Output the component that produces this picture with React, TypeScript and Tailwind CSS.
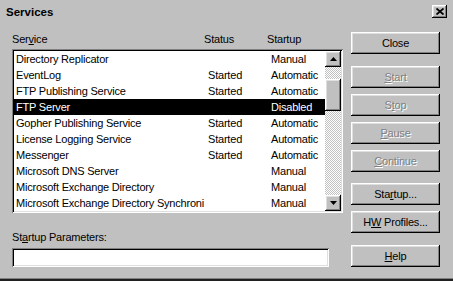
import type { ReactNode } from 'react';

type Row = { name: string; status: string; startup: string; selected?: boolean };

const rows: Row[] = [
  { name: 'Directory Replicator', status: '', startup: 'Manual' },
  { name: 'EventLog', status: 'Started', startup: 'Automatic' },
  { name: 'FTP Publishing Service', status: 'Started', startup: 'Automatic' },
  { name: 'FTP Server', status: '', startup: 'Disabled', selected: true },
  { name: 'Gopher Publishing Service', status: 'Started', startup: 'Automatic' },
  { name: 'License Logging Service', status: 'Started', startup: 'Automatic' },
  { name: 'Messenger', status: 'Started', startup: 'Automatic' },
  { name: 'Microsoft DNS Server', status: '', startup: 'Manual' },
  { name: 'Microsoft Exchange Directory', status: '', startup: 'Manual' },
  { name: 'Microsoft Exchange Directory Synchroni', status: '', startup: 'Manual' },
];

const raised =
  'bg-[#c0c0c0] shadow-[inset_-1px_-1px_#000,inset_1px_1px_#fff,inset_-2px_-2px_#808080,inset_2px_2px_#dfdfdf]';

const sunken =
  'shadow-[inset_1px_1px_#808080,inset_-1px_-1px_#fff,inset_2px_2px_#000,inset_-2px_-2px_#dfdfdf]';

function Btn({ children, disabled, className = '' }: { children: ReactNode; disabled?: boolean; className?: string }) {
  return (
    <button
      type="button"
      className={`${raised} h-[22px] w-[89px] flex items-center justify-center ${
        disabled ? 'text-[#808080] [text-shadow:1px_1px_0_#fff]' : 'text-black'
      } ${className}`}
    >
      <span className="whitespace-pre">{children}</span>
    </button>
  );
}

function ScrollArrow({ up }: { up?: boolean }) {
  return (
    <div className={`${raised} w-[16px] h-[16px] flex items-center justify-center`}>
      <svg width="7" height="4" viewBox="0 0 7 4">
        {up ? <path d="M3.5 0 L7 4 L0 4 Z" fill="#000" /> : <path d="M0 0 L7 0 L3.5 4 Z" fill="#000" />}
      </svg>
    </div>
  );
}

export default function App() {
  return (
    <div className="w-[453px] h-[281px] bg-[#c0c0c0] flex flex-col font-['Liberation_Sans',Arial,sans-serif] text-[11px] tracking-[-0.2px] text-black select-none">
      {/* title row */}
      <div className="h-[28px] flex items-start justify-between pl-[6px] pr-[6px] pt-[5px]">
        <span className="text-[11.5px] font-bold leading-[14px] tracking-normal">Services</span>
        <div className={`${raised} w-[15px] h-[13px] flex items-center justify-center`}>
          <svg width="8" height="7" viewBox="0 0 8 7">
            <path d="M0.5 0.5 L7.5 6.5 M7.5 0.5 L0.5 6.5" stroke="#000" strokeWidth="1.8" />
          </svg>
        </div>
      </div>

      <div className="flex-1 flex pl-[12px]">
        {/* left column */}
        <div className="w-[331px] flex flex-col">
          <div className="h-[21px] flex items-center leading-[14px]">
            <span className="w-[192px]">
              Ser<u className="underline-offset-[1px]">v</u>ice
            </span>
            <span className="w-[63px]">Status</span>
            <span>Startup</span>
          </div>

          <div className={`h-[164px] bg-white p-[2px] flex ${sunken}`}>
            <div className="flex-1 flex flex-col">
              {rows.map((r) => (
                <div
                  key={r.name}
                  className={`h-[16px] flex items-center pl-[2px] leading-[14px] ${
                    r.selected ? 'bg-black text-white' : ''
                  }`}
                >
                  <span className="w-[192px] whitespace-nowrap overflow-hidden">{r.name}</span>
                  <span className="w-[63px]">{r.status}</span>
                  <span>{r.startup}</span>
                </div>
              ))}
            </div>
            <div className="w-[16px] flex flex-col bg-[repeating-conic-gradient(#fff_0_25%,#c0c0c0_0_50%)] bg-[length:2px_2px]">
              <ScrollArrow up />
              <div className="flex-1 pt-[12px]">
                <div className={`${raised} w-[16px] h-[32px]`} />
              </div>
              <ScrollArrow />
            </div>
          </div>

          <div className="mt-[17px] leading-[14px]">
            St<u className="underline-offset-[1px]">a</u>rtup Parameters:
          </div>
          <div className={`mt-[4px] w-[317px] h-[19px] bg-white ${sunken}`} />
        </div>

        {/* right column */}
        <div className="ml-[8px] pt-[4px] flex flex-col">
          <Btn>Close</Btn>
          <Btn disabled className="mt-[12px]">
            <u>S</u>tart
          </Btn>
          <Btn disabled className="mt-[6px]">
            S<u>t</u>op
          </Btn>
          <Btn disabled className="mt-[6px]">
            <u>P</u>ause
          </Btn>
          <Btn disabled className="mt-[6px]">
            <u>C</u>ontinue
          </Btn>
          <Btn className="mt-[11px]">
            Sta<u>r</u>tup...
          </Btn>
          <Btn className="mt-[6px]">
            H<u>W</u>{' '}Profiles...
          </Btn>
          <Btn className="mt-[12px]">
            <u>H</u>elp
          </Btn>
        </div>
      </div>

      {/* bottom frame edge */}
      <div className="h-[1px] bg-[#808080]" />
      <div className="h-[2px] bg-[#202020]" />
    </div>
  );
}
